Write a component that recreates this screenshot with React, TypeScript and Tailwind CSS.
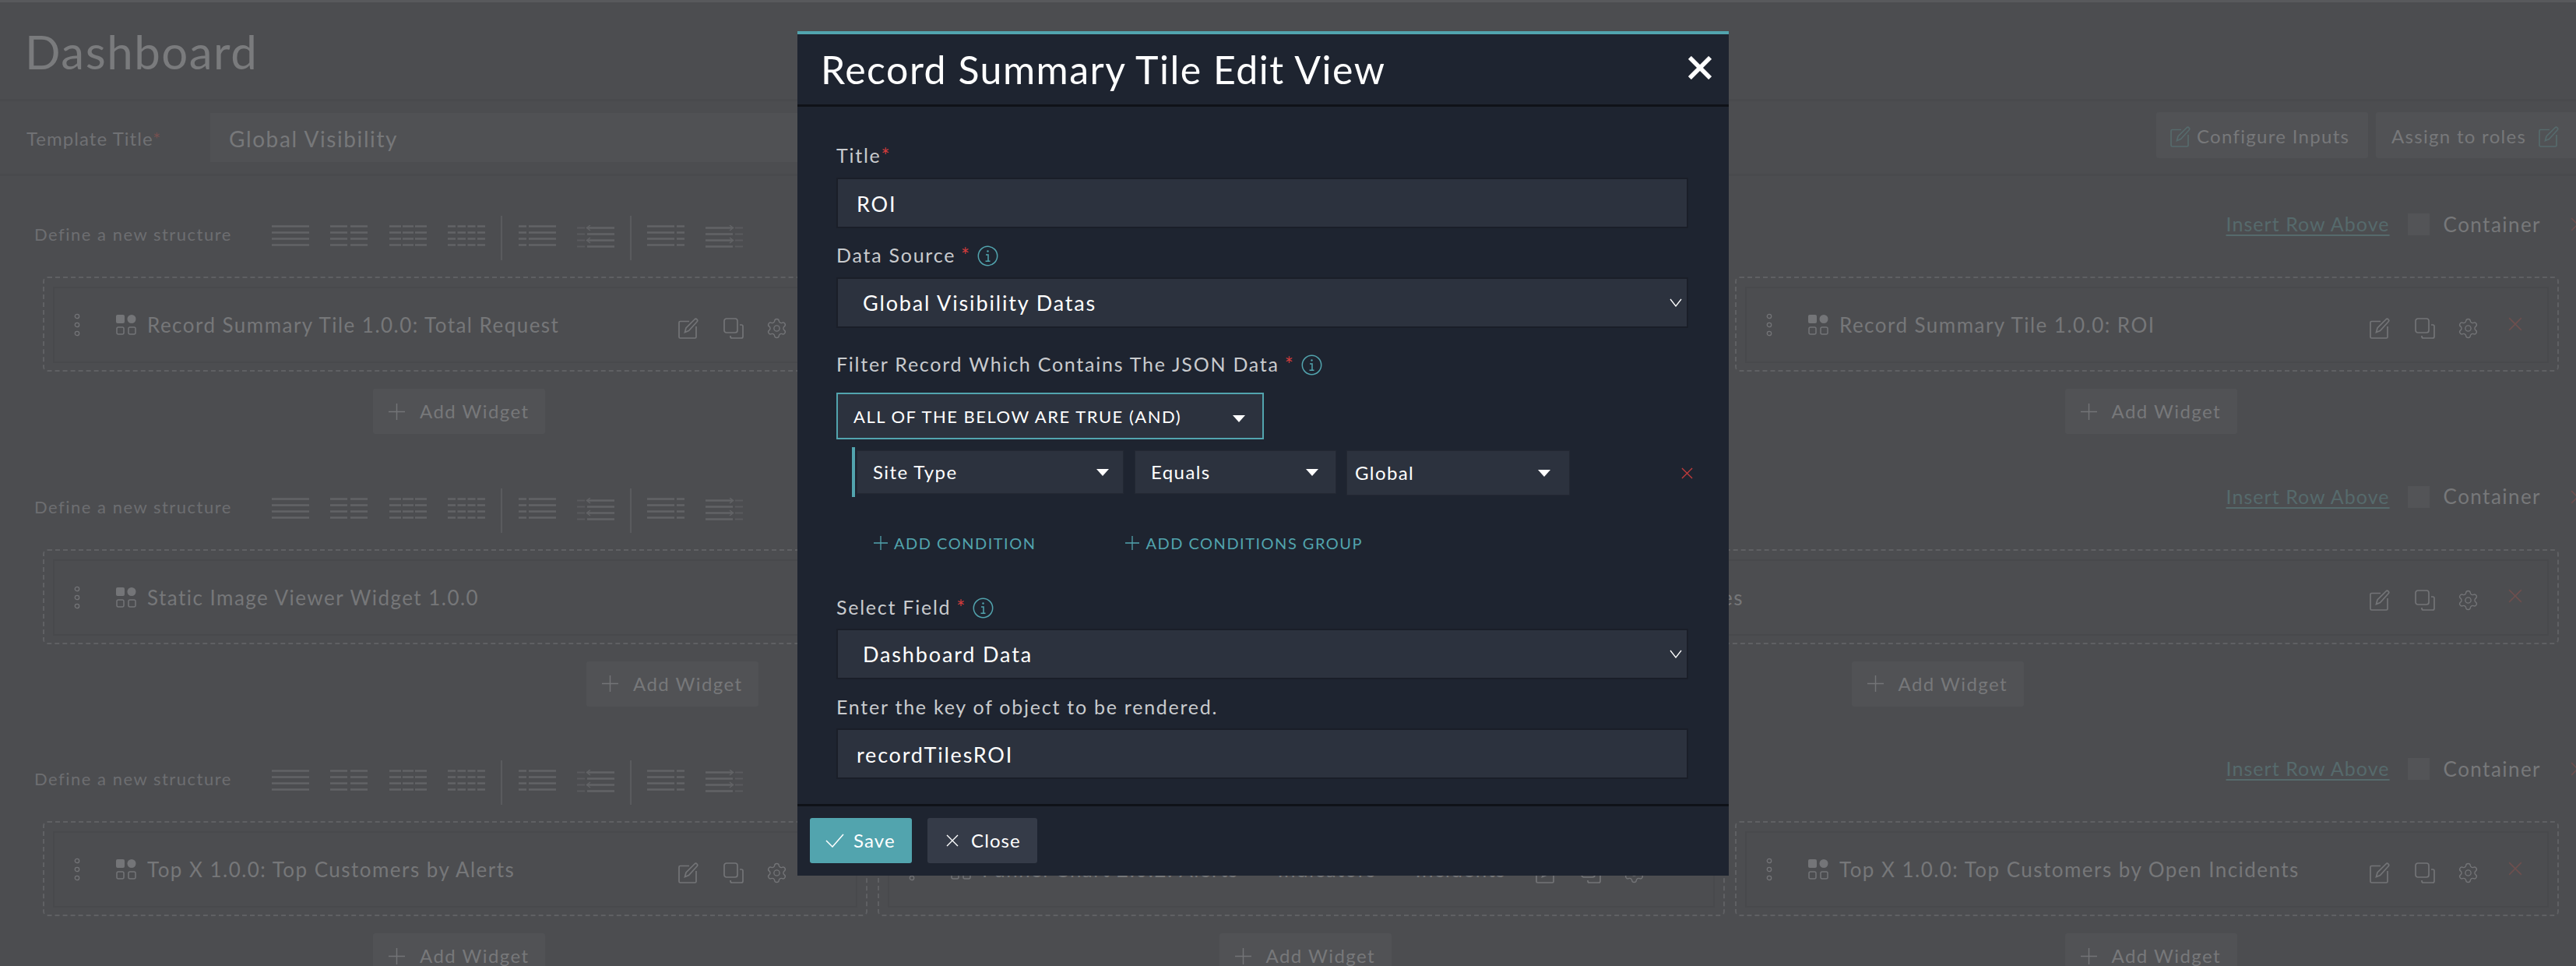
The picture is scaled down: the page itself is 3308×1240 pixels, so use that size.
import type { ReactNode } from 'react';
import { Settings } from 'lucide-react';

type Seg = [number, number];

const structures: Seg[][] = [
  [[0, 48]],
  [[0, 22], [26, 22]],
  [[0, 15], [17, 14], [33, 15]],
  [[0, 10], [12.5, 10.5], [25.5, 10], [38, 10]],
];

function StructIcon({ segs, y = 0, faint, arrow }: { segs: Seg[]; y?: number; faint?: Seg; arrow?: 'left' | 'right' }) {
  const rows = [1.5, 9.5, 17.5, 25.5];
  return (
    <svg width="48" height="30" viewBox="0 0 48 30" className="shrink-0">
      {rows.map((r) => (
        <g key={r}>
          {segs.map(([x, w]) => (
            <rect key={x} x={x} y={r + y - 1.25} width={w} height="2.500" fill="#626366" />
          ))}
          {faint && <rect x={faint[0]} y={r + y - 1} width={faint[1]} height="2" fill="#5a5b5e" />}
        </g>
      ))}
      {arrow === 'left' && (
        <path d="M17 0 12.500 3.500 17 7M17 16 12.500 19.500 17 23" fill="none" stroke="#626366" strokeWidth="1.500" />
      )}
      {arrow === 'right' && (
        <path d="M31 0 35.500 3.500 31 7M31 16 35.500 19.500 31 23" fill="none" stroke="#626366" strokeWidth="1.500" />
      )}
    </svg>
  );
}

function StructIcons() {
  return (
    <div className="flex items-center h-full ml-[51px]">
      <div className="flex gap-[27.300px] -mt-[3px]">
        {structures.map((segs, i) => (
          <StructIcon key={i} segs={segs} />
        ))}
      </div>
      <div className="w-[2px] h-full bg-[#5a5b5e] ml-[20px]" />
      <div className="flex gap-[27px] ml-[21px] -mt-[3px]">
        <StructIcon segs={[[0, 10], [13, 35]]} />
        <StructIcon segs={[[13, 35]]} faint={[0, 10]} y={2} arrow="left" />
      </div>
      <div className="w-[2px] h-full bg-[#5a5b5e] ml-[20px]" />
      <div className="flex gap-[27px] ml-[20px] -mt-[3px]">
        <StructIcon segs={[[0, 35], [38, 10]]} />
        <StructIcon segs={[[0, 35]]} faint={[38, 10]} y={2} arrow="right" />
      </div>
    </div>
  );
}

function EditIcon({ color = '#737477', className = '' }: { color?: string; className?: string }) {
  return (
    <svg width="26" height="27" viewBox="0 0 26 27" fill="none" stroke={color} strokeWidth="1.700" className={className}>
      <path d="M14 4.500H2.500a1.500 1.500 0 0 0-1.500 1.500V24.500A1.500 1.500 0 0 0 2.500 26H21.500A1.500 1.500 0 0 0 23 24.500V11" />
      <path d="M8.500 18.500 10 13 21 2a2 2 0 0 1 3 3L13.500 16.500Z" />
    </svg>
  );
}

function CopyIcon() {
  return (
    <svg width="26" height="27" viewBox="0 0 26 27" fill="none" stroke="#737477" strokeWidth="1.700">
      <rect x="1" y="1" width="17" height="18" rx="3" />
      <path d="M21 9h2a2 2 0 0 1 2 2v13a2 2 0 0 1-2 2H11a2 2 0 0 1-2-2v-1" />
    </svg>
  );
}

function GridIcon() {
  return (
    <svg width="26" height="26" viewBox="0 0 26 26" className="shrink-0">
      <rect x="0" y="0" width="11" height="11" rx="2" fill="#747578" />
      <circle cx="20" cy="5.500" r="5.500" fill="#747578" />
      <rect x="1" y="16" width="9" height="9" rx="2" fill="none" stroke="#737477" strokeWidth="1.500" />
      <rect x="16" y="16" width="9" height="9" rx="2" fill="none" stroke="#737477" strokeWidth="1.500" />
    </svg>
  );
}

function DragIcon() {
  return (
    <svg width="8" height="30" viewBox="0 0 8 30" fill="none" stroke="#737477" strokeWidth="1.300" className="shrink-0">
      <circle cx="4" cy="4" r="2.700" />
      <circle cx="4" cy="15" r="2.700" />
      <circle cx="4" cy="26" r="2.700" />
    </svg>
  );
}

function ThinX({ size, color, strokeWidth = 1.4 }: { size: number; color: string; strokeWidth?: number }) {
  return (
    <svg width={size} height={size} viewBox="0 0 16 16" fill="none" stroke={color} strokeWidth={strokeWidth}>
      <path d="M1 1 15 15M15 1 1 15" />
    </svg>
  );
}

function Plus({ size, color }: { size: number; color: string }) {
  return (
    <svg width={size} height={size} viewBox="0 0 20 20" fill="none" stroke={color} strokeWidth="1.400">
      <path d="M10 0V20M0 10H20" />
    </svg>
  );
}

function Widget({ title, width, titleParts }: { title?: string; width: string; titleParts?: string[] }) {
  return (
    <div className={`${width} h-[122px] shrink-0 border-2 border-dashed border-[#5f6063] rounded-[6px] pt-[11px] px-[11px]`}>
      <div className="h-[98px] border-2 border-[#48494c] flex items-center pl-[25px] pr-[32px]">
        <DragIcon />
        <div className="ml-[46px]">
          <GridIcon />
        </div>
        {title && <span className="ml-[14px] mt-[1px] text-[26px] tracking-[1.470px] text-[#767779] whitespace-nowrap">{title}</span>}
        {titleParts && (
          <div className="ml-[14px] mt-[1px] flex gap-[50px] text-[26px] tracking-[1.470px] text-[#767779] whitespace-nowrap">
            {titleParts.map((t) => (
              <span key={t}>{t}</span>
            ))}
          </div>
        )}
        <div className="ml-auto flex items-center">
          <div className="mt-[8px] flex items-center">
            <EditIcon />
            <div className="ml-[32px]">
              <CopyIcon />
            </div>
            <Settings size={29} strokeWidth={1.150} color="#737477" className="ml-[28px]" />
          </div>
          <div className="ml-[37px] mb-[3px]">
            <ThinX size={18} color="#6e4f4e" />
          </div>
        </div>
      </div>
    </div>
  );
}

function AddWidget() {
  return (
    <div className="h-[58px] w-[221px] mx-auto mt-[22px] relative left-[5px] bg-[#515255] rounded-[3px] flex items-center pl-[20px]">
      <Plus size={21} color="#737477" />
      <span className="ml-[19px] text-[24px] tracking-[1.450px] text-[#77787a] whitespace-nowrap">Add Widget</span>
    </div>
  );
}

function Section({ children }: { children: ReactNode }) {
  return (
    <section className="h-[349.500px]">
      <div className="h-[57px] flex justify-between pl-[44px] -mr-[11px]">
        <div className="flex items-center h-full">
          <span className="text-[22px] tracking-[1.500px] text-[#6d6e71] whitespace-nowrap mb-[10px]">Define a new structure</span>
          <StructIcons />
        </div>
        <div className="flex items-center self-start -mt-[3px] h-[28px]">
          <a className="text-[25px] tracking-[1.050px] text-[#566a6c] underline underline-offset-[4px] whitespace-nowrap">Insert Row Above</a>
          <div className="w-[28px] h-[28px] bg-[#535457] ml-[23px]" />
          <span className="ml-[18px] text-[26px] tracking-[1.450px] text-[#77787a]">Container</span>
          <div className="ml-[38px] shrink-0">
            <ThinX size={18} color="#6e4f4e" />
          </div>
        </div>
      </div>
      <div className="mt-[21px] pl-[55px] flex">{children}</div>
    </section>
  );
}

function Field({ label, required, tight, info, className = '' }: { label: string; required?: boolean; tight?: boolean; info?: boolean; className?: string }) {
  return (
    <div className={`h-[32px] flex items-center text-[25px] tracking-[1.750px] text-[#c9cbce] whitespace-nowrap ${className}`}>
      {label}
      {required && <span className={`${tight ? 'ml-0' : 'ml-[7px]'} text-[#d23c3c] text-[26px] tracking-normal`}>*</span>}
      {info && <InfoIcon />}
    </div>
  );
}

function InfoIcon() {
  return (
    <svg width="27" height="27" viewBox="0 0 27 27" fill="none" stroke="#52a4ae" strokeWidth="1.500" className="ml-[10px]">
      <circle cx="13.500" cy="13.500" r="12.200" />
      <path d="M11 12h3v8M10.500 20.200h6" />
      <circle cx="13.500" cy="7.500" r="1.200" fill="#52a4ae" stroke="none" />
    </svg>
  );
}

const inputClass =
  'block w-[1094px] h-[65px] px-[24px] pt-[2px] bg-[#2c323e] border-2 border-[#1a1e28] text-[27px] tracking-[1.800px] text-white outline-none';

function SelectBox({ value }: { value: string }) {
  return (
    <div className="w-[1094px] h-[65px] pl-[32px] pr-[6px] bg-[#2c323e] border-2 border-[#1a1e28] flex items-center justify-between text-[27px] tracking-[1.850px] text-white">
      <span className="mt-[1px]">{value}</span>
      <svg width="16" height="11" viewBox="0 0 16 11" fill="none" stroke="#ffffff" strokeWidth="1.300">
        <path d="M1 1 8 10 15 1" />
      </svg>
    </div>
  );
}

function Caret() {
  return <div className="w-0 h-0 border-x-[8px] border-x-transparent border-t-[9px] border-t-white" />;
}

function CondSelect({ label, width, pad, height = 'h-[56px]' }: { label: string; width: string; pad: string; height?: string }) {
  return (
    <div className={`${width} ${pad} ${height} bg-[#2c323e] border border-[#232833] flex items-center justify-between text-[24px] tracking-[1.400px] text-white`}>
      {label}
      <Caret />
    </div>
  );
}

export default function App() {
  return (
    <div className="relative w-[3308px] h-[1240px] overflow-hidden bg-[#4c4d50] font-['Lato',sans-serif]">
      <header className="h-[127px] border-t-[3px] border-[#58595c] pl-[32px] pt-[27px]">
        <h1 className="text-[60px] leading-[72px] tracking-[1.500px] text-[#7a7b7d]">Dashboard</h1>
      </header>
      <div className="h-[99px] border-y-[3px] border-[#494a4d] pl-[34px] flex items-center">
        <span className="w-[236px] mt-[2px] shrink-0 text-[24px] tracking-[1.050px] text-[#707174] whitespace-nowrap">
          Template Title<span className="text-[#75504f]">*</span>
        </span>
        <div className="w-[1700px] h-[63px] bg-[#505154] pl-[24px] pt-[2px] flex items-center text-[28px] tracking-[1.600px] text-[#77787a]">
          Global Visibility
        </div>
        <div className="ml-auto -mt-[6px] flex">
          <div className="w-[272px] h-[59px] pt-[3px] bg-[#515255] rounded-[3px] flex items-center pl-[18px]">
            <EditIcon color="#566a6c" />
            <span className="ml-[8px] text-[24px] tracking-[1.300px] text-[#77787a] whitespace-nowrap">Configure Inputs</span>
          </div>
          <div className="ml-[10px] w-[257px] h-[59px] pt-[3px] bg-[#515255] rounded-l-[3px] flex items-center pl-[20px]">
            <span className="text-[24px] tracking-[1.300px] text-[#77787a] whitespace-nowrap">Assign to roles</span>
            <EditIcon color="#566a6c" className="ml-[16px]" />
          </div>
        </div>
      </div>

      <main className="mt-[51px]">
        <Section>
          <div className="w-[1059px] shrink-0">
            <Widget width="w-[1059px]" title="Record Summary Tile 1.0.0: Total Request" />
            <AddWidget />
          </div>
          <div className="w-[1088px] ml-[13px] shrink-0">
            <Widget width="w-[1088px]" title="Record Summary Tile 1.0.0: Open Request" />
            <AddWidget />
          </div>
          <div className="w-[1058px] ml-[13px] shrink-0">
            <Widget width="w-[1058px]" title="Record Summary Tile 1.0.0: ROI" />
            <AddWidget />
          </div>
        </Section>
        <Section>
          <div className="w-[1617px] shrink-0">
            <Widget width="w-[1617px]" title="Static Image Viewer Widget 1.0.0" />
            <div className="relative -left-[5px]">
              <AddWidget />
            </div>
          </div>
          <div className="w-[1596px] ml-[18px] shrink-0">
            <Widget width="w-[1596px]" title="Static Image Viewer: Site Images" />
            <div className="relative -left-[5px]">
              <AddWidget />
            </div>
          </div>
        </Section>
        <Section>
          <div className="w-[1059px] shrink-0">
            <Widget width="w-[1059px]" title="Top X 1.0.0: Top Customers by Alerts" />
            <AddWidget />
          </div>
          <div className="w-[1088px] ml-[13px] shrink-0">
            <Widget width="w-[1088px]" titleParts={['Funnel Chart 2.0.2: Alerts', 'Indicators', 'Incidents']} />
            <AddWidget />
          </div>
          <div className="w-[1058px] ml-[13px] shrink-0">
            <Widget width="w-[1058px]" title="Top X 1.0.0: Top Customers by Open Incidents" />
            <AddWidget />
          </div>
        </Section>
      </main>

      {/* edit dialog */}
      <div className="absolute left-[1024px] top-[40px] w-[1196px] h-[1084px] bg-[#1e2430] border-t-[4px] border-[#52a4ae] flex flex-col">
        <div className="h-[93px] shrink-0 border-b-[3px] border-[#0f1218] flex items-center justify-between pl-[30px] pr-[22px]">
          <h2 className="text-[50px] tracking-[1.500px] text-white whitespace-nowrap">Record Summary Tile Edit View</h2>
          <div className="mb-[4px]">
            <ThinX size={30} color="#ffffff" strokeWidth={3} />
          </div>
        </div>
        <div className="flex-1 pt-[47px] pl-[50px]">
          <Field label="Title" required tight />
          <input readOnly value="ROI" className={`${inputClass} mt-[12px]`} />
          <Field label="Data Source" required info className="mt-[19px]" />
          <div className="mt-[12px]">
            <SelectBox value="Global Visibility Datas" />
          </div>
          <Field label="Filter Record Which Contains The JSON Data" required info className="mt-[31px]" />
          <div className="mt-[20px] w-[549px] h-[60px] border-2 border-[#52a4ae] bg-[#2c323e] pl-[20px] pr-[22px] flex items-center justify-between text-[22px] tracking-[1.500px] text-white">
            ALL OF THE BELOW ARE TRUE (AND)
            <div className="mt-[6px]">
              <Caret />
            </div>
          </div>
          <div className="mt-[10px] ml-[20px] flex items-start">
            <div className="w-[4px] h-[64px] bg-[#52a4ae]" />
            <div className="ml-[2px] mt-[4px] flex items-start">
              <CondSelect label="Site Type" width="w-[343px]" pad="pl-[20px] pr-[18px]" />
              <div className="ml-[14px]">
                <CondSelect label="Equals" width="w-[259px]" pad="pl-[20px] pr-[22px]" />
              </div>
              <div className="ml-[13px]">
                <CondSelect label="Global" width="w-[287px]" pad="pl-[10px] pr-[24px]" height="h-[58px]" />
              </div>
            </div>
            <div className="ml-[143px] mt-[26px]">
              <ThinX size={15} color="#c23b3b" />
            </div>
          </div>
          <div className="mt-[44px] ml-[48px] h-[30px] flex items-center text-[20px] tracking-[1.500px] text-[#52a4ae] whitespace-nowrap">
            <Plus size={18} color="#52a4ae" />
            <span className="ml-[8px]">ADD CONDITION</span>
            <div className="ml-[115px]">
              <Plus size={18} color="#52a4ae" />
            </div>
            <span className="ml-[8px]">ADD CONDITIONS GROUP</span>
          </div>
          <Field label="Select Field" required info className="mt-[52px]" />
          <div className="mt-[11px]">
            <SelectBox value="Dashboard Data" />
          </div>
          <Field label="Enter the key of object to be rendered." className="mt-[20px]" />
          <input readOnly value="recordTilesROI" className={`${inputClass} mt-[11px]`} />
        </div>
        <div className="h-[92px] shrink-0 border-t-[3px] border-[#0f1218] pl-[16px] pt-[15px] flex items-start">
          <div className="w-[131px] h-[58px] rounded-[3px] bg-[#52a4ae] flex items-center pl-[20px] text-[24px] tracking-[1.100px] text-white">
            <svg width="24" height="18" viewBox="0 0 24 18" fill="none" stroke="#ffffff" strokeWidth="1.500">
              <path d="M1 9 9 17 23 1" />
            </svg>
            <span className="ml-[12px]">Save</span>
          </div>
          <div className="ml-[20px] w-[141px] h-[58px] rounded-[3px] bg-[#353b48] flex items-center pl-[24px] text-[24px] tracking-[1.100px] text-white">
            <ThinX size={16} color="#ffffff" />
            <span className="ml-[16px]">Close</span>
          </div>
        </div>
      </div>
    </div>
  );
}
